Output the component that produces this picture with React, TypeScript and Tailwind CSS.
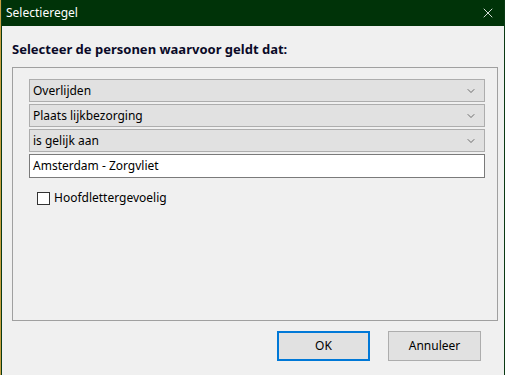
import { ChevronDown, X } from "lucide-react";

const combos = ["Overlijden", "Plaats lijkbezorging", "is gelijk aan"];

function Combo({ label }: { label: string }) {
  return (
    <div className="flex h-[23px] items-center justify-between border border-[#adadad] bg-[#e1e1e1] pl-[3px] pr-[7px]">
      <span>{label}</span>
      <ChevronDown size={12} strokeWidth={1.5} className="text-[#444]" />
    </div>
  );
}

export default function App() {
  return (
    <div
      className="flex h-[375px] w-[505px] bg-[#c8a040] text-[12px] text-black"
      style={{ fontFamily: '"Noto Sans", "Liberation Sans", sans-serif' }}
    >
      <div className="flex h-full flex-1 flex-col border-x border-[#0a3a14] bg-[#f0f0f0] ml-px">
        <header className="flex h-[26px] shrink-0 items-center justify-between bg-[#003308] pl-[4px] pr-[8px] text-[12px] text-white">
          <span>Selectieregel</span>
          <X size={16} strokeWidth={1.25} />
        </header>

        <div className="flex flex-1 flex-col pl-[10px] pr-[6px]">
          <h1 className="mt-[15px] text-[13px] font-bold leading-[16px] text-[#0a0a28]">
            Selecteer de personen waarvoor geldt dat:
          </h1>

          <section className="mt-[10px] flex h-[254px] flex-col border border-[#a0a0a0] pl-[16px] pr-[12px] pt-[11px]">
            <div className="flex flex-col gap-[2px]">
              {combos.map((c) => (
                <Combo key={c} label={c} />
              ))}
              <div className="flex h-[24px] items-center border border-[#7a7a7a] bg-white pl-[3px]">
                Amsterdam - Zorgvliet
              </div>
            </div>

            <label className="mt-[11px] ml-[8px] flex items-center gap-[4px]">
              <span className="h-[13px] w-[13px] border border-[#333] bg-white" />
              <span>Hoofdlettergevoelig</span>
            </label>
          </section>

          <footer className="mt-[10px] flex justify-end gap-[18px] pr-[17px]">
            <button className="h-[30px] w-[93px] border-2 border-[#0078d7] bg-[#e1e1e1]">
              OK
            </button>
            <button className="h-[30px] w-[93px] border border-[#adadad] bg-[#e1e1e1]">
              Annuleer
            </button>
          </footer>
        </div>
      </div>
    </div>
  );
}
